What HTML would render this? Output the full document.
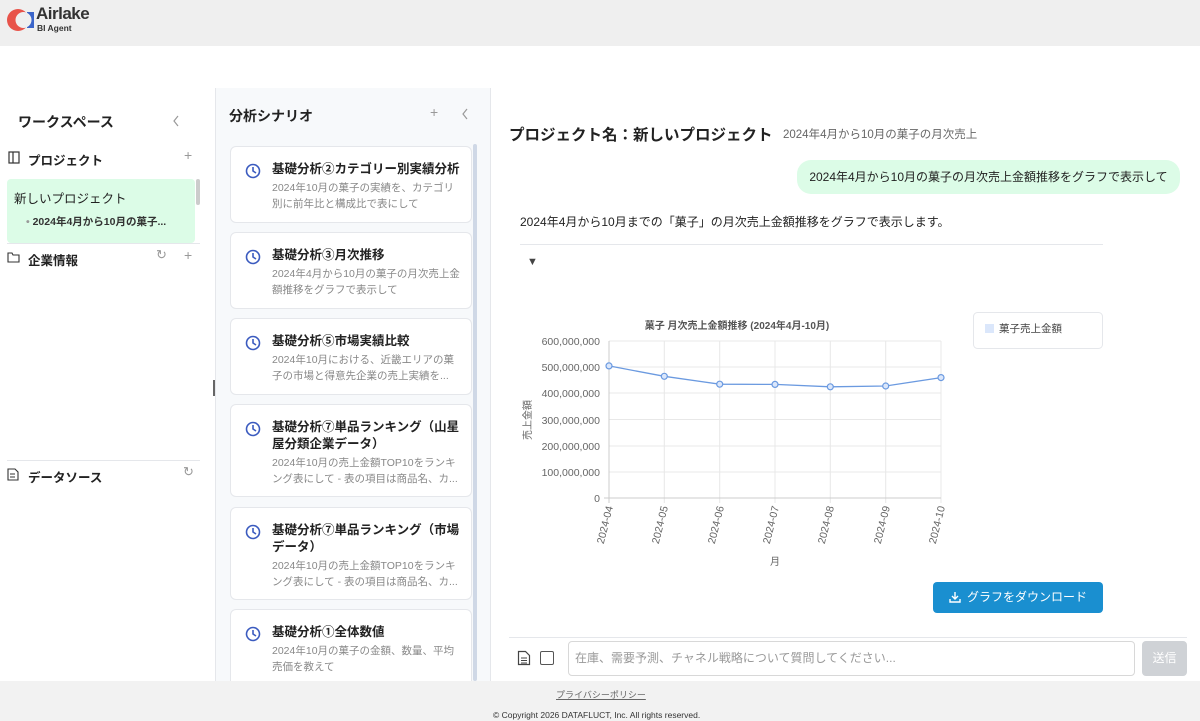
<!DOCTYPE html>
<html><head><meta charset="utf-8"><style>
*{box-sizing:border-box;margin:0;padding:0}
body{width:1200px;height:721px;overflow:hidden;background:#fff;font-family:"Liberation Sans","Noto Sans CJK JP",sans-serif;color:#222;position:relative}
.a{position:absolute}
.hdr{left:0;top:0;width:1200px;height:46px;background:#efefef}
.side{left:0;top:88px;width:213px;height:593px;background:#fff}
.mid{left:215px;top:88px;width:276px;height:593px;background:#f7f9fb;border-left:1px solid #e5e7eb;border-right:1px solid #e5e7eb}
.card{position:absolute;left:14px;width:242px;background:#fff;border:1px solid #e5e7eb;border-radius:6px}
.card .t{position:absolute;left:41px;top:14px;font-size:12.5px;font-weight:bold;color:#222;line-height:17px;width:195px}
.card .d{position:absolute;left:41px;font-size:10.5px;color:#888;line-height:16px;width:190px}
.clk{position:absolute;left:14px;top:16px;width:16px;height:16px}
.foot{left:0;top:681px;width:1200px;height:40px;background:#f2f2f2}
.gray{color:#999}
</style></head><body>
<div class="a hdr">
<svg class="a" style="left:6px;top:7px" width="30" height="26" viewBox="0 0 30 26"><circle cx="12" cy="13" r="11" fill="#e8534a"/><rect x="21" y="5" width="7" height="16" fill="#3a64c9"/><circle cx="17.5" cy="13" r="8" fill="#efefef"/></svg>
<div class="a" style="left:36px;top:4px;font-size:17px;font-weight:bold;color:#333;letter-spacing:-0.5px">Airlake</div>
<div class="a" style="left:37px;top:23px;font-size:8.5px;font-weight:bold;color:#333">BI Agent</div>
</div>

<div class="a side">
<div class="a" style="left:18px;top:24px;font-size:14px;font-weight:bold">ワークスペース</div>
<svg class="a" style="left:172px;top:27px" width="8" height="12"><path d="M6 1L2 6l4 5" fill="none" stroke="#999" stroke-width="1.2"/></svg>
<svg class="a" style="left:8px;top:63px" width="12" height="13"><rect x="1" y="1" width="10" height="11" fill="none" stroke="#333" stroke-width="1.2"/><line x1="5" y1="1" x2="5" y2="12" stroke="#333" stroke-width="1.2"/></svg>
<div class="a" style="left:28px;top:62px;font-size:12.5px;font-weight:bold">プロジェクト</div>
<div class="a gray" style="left:184px;top:59px;font-size:14px">+</div>
<div class="a" style="left:7px;top:91px;width:188px;height:64px;background:#dcfce7;border-radius:4px"></div>
<div class="a" style="left:196px;top:91px;width:4px;height:26px;background:#ccc;border-radius:2px"></div>
<div class="a" style="left:14px;top:100px;font-size:12.5px">新しいプロジェクト</div>
<div class="a" style="left:26px;top:126px;font-size:10.5px;font-weight:bold;color:#333"><span class="gray">• </span>2024年4月から10月の菓子...</div>
<div class="a" style="left:7px;top:155px;width:193px;height:1px;background:#e5e7eb"></div>
<svg class="a" style="left:7px;top:164px" width="13" height="11"><path d="M1 1h4l1 2h6v7H1z" fill="none" stroke="#333" stroke-width="1.1"/></svg>
<div class="a" style="left:28px;top:162px;font-size:12.5px;font-weight:bold">企業情報</div>
<div class="a gray" style="left:156px;top:159px;font-size:13px">↻</div>
<div class="a gray" style="left:184px;top:159px;font-size:14px">+</div>
<div class="a" style="left:7px;top:372px;width:193px;height:1px;background:#e5e7eb"></div>
<svg class="a" style="left:7px;top:380px" width="12" height="13"><path d="M1 1h7l3 3v8H1z" fill="none" stroke="#333" stroke-width="1.1"/><path d="M3 6h5M3 9h5" stroke="#333"/></svg>
<div class="a" style="left:28px;top:379px;font-size:12.5px;font-weight:bold">データソース</div>
<div class="a gray" style="left:183px;top:376px;font-size:13px">↻</div>
</div>
<div class="a" style="left:213px;top:380px;width:2px;height:16px;background:#666"></div>
<div class="a" style="left:489px;top:380px;width:2px;height:16px;background:#666"></div>

<div class="a mid">
<div class="a" style="left:13px;top:18px;font-size:14px;font-weight:bold">分析シナリオ</div>
<div class="a gray" style="left:214px;top:16px;font-size:14px">+</div>
<svg class="a" style="left:245px;top:20px" width="8" height="12"><path d="M6 1L2 6l4 5" fill="none" stroke="#999" stroke-width="1.2"/></svg>
<div class="a" style="left:257px;top:56px;width:4px;height:537px;background:#cfd8e6;border-radius:2px"></div>
<div class="card" style="top:58px;height:77px"><svg class="clk"><circle cx="8" cy="8" r="6.5" fill="none" stroke="#3b5bbf" stroke-width="1.6"/><path d="M8 4v4l3 2" fill="none" stroke="#3b5bbf" stroke-width="1.6"/></svg><div class="t">基礎分析②カテゴリー別実績分析</div><div class="d" style="top:33px">2024年10月の菓子の実績を、カテゴリ別に前年比と構成比で表にして</div></div>
<div class="card" style="top:144px;height:77px"><svg class="clk"><circle cx="8" cy="8" r="6.5" fill="none" stroke="#3b5bbf" stroke-width="1.6"/><path d="M8 4v4l3 2" fill="none" stroke="#3b5bbf" stroke-width="1.6"/></svg><div class="t">基礎分析③月次推移</div><div class="d" style="top:33px">2024年4月から10月の菓子の月次売上金額推移をグラフで表示して</div></div>
<div class="card" style="top:230px;height:77px"><svg class="clk"><circle cx="8" cy="8" r="6.5" fill="none" stroke="#3b5bbf" stroke-width="1.6"/><path d="M8 4v4l3 2" fill="none" stroke="#3b5bbf" stroke-width="1.6"/></svg><div class="t">基礎分析⑤市場実績比較</div><div class="d" style="top:33px">2024年10月における、近畿エリアの菓子の市場と得意先企業の売上実績を...</div></div>
<div class="card" style="top:316px;height:93px"><svg class="clk"><circle cx="8" cy="8" r="6.5" fill="none" stroke="#3b5bbf" stroke-width="1.6"/><path d="M8 4v4l3 2" fill="none" stroke="#3b5bbf" stroke-width="1.6"/></svg><div class="t">基礎分析⑦単品ランキング（山星屋分類企業データ）</div><div class="d" style="top:50px">2024年10月の売上金額TOP10をランキング表にして - 表の項目は商品名、カ...</div></div>
<div class="card" style="top:419px;height:93px"><svg class="clk"><circle cx="8" cy="8" r="6.5" fill="none" stroke="#3b5bbf" stroke-width="1.6"/><path d="M8 4v4l3 2" fill="none" stroke="#3b5bbf" stroke-width="1.6"/></svg><div class="t">基礎分析⑦単品ランキング（市場データ）</div><div class="d" style="top:50px">2024年10月の売上金額TOP10をランキング表にして - 表の項目は商品名、カ...</div></div>
<div class="card" style="top:521px;height:90px"><svg class="clk"><circle cx="8" cy="8" r="6.5" fill="none" stroke="#3b5bbf" stroke-width="1.6"/><path d="M8 4v4l3 2" fill="none" stroke="#3b5bbf" stroke-width="1.6"/></svg><div class="t">基礎分析①全体数値</div><div class="d" style="top:33px">2024年10月の菓子の金額、数量、平均売価を教えて</div></div>
</div>

<div class="a" style="left:509px;top:123px;font-size:15.5px;font-weight:bold">プロジェクト名：新しいプロジェクト</div>
<div class="a" style="left:783px;top:126px;font-size:11.5px;color:#666">2024年4月から10月の菓子の月次売上</div>
<div class="a" style="left:797px;top:160px;width:383px;height:34px;background:#dcfce7;border-radius:14px;font-size:12px;line-height:34px;text-align:center">2024年4月から10月の菓子の月次売上金額推移をグラフで表示して</div>
<div class="a" style="left:520px;top:213px;font-size:12px">2024年4月から10月までの「菓子」の月次売上金額推移をグラフで表示します。</div>
<div class="a" style="left:520px;top:244px;width:583px;height:1px;background:#e5e7eb"></div>
<div class="a" style="left:527px;top:256px;font-size:11px;color:#444">▼</div>

<svg class="a" style="left:500px;top:300px" width="620" height="280" font-family="Liberation Sans, Noto Sans CJK JP, sans-serif">
<text x="237" y="29" font-size="10" font-weight="bold" fill="#555" text-anchor="middle">菓子 月次売上金額推移 (2024年4月-10月)</text>
<g stroke="#e8e8e8" stroke-width="1">
<line x1="109" y1="41" x2="441" y2="41"/><line x1="109" y1="67" x2="441" y2="67"/><line x1="109" y1="93" x2="441" y2="93"/><line x1="109" y1="119.5" x2="441" y2="119.5"/><line x1="109" y1="146" x2="441" y2="146"/><line x1="109" y1="172" x2="441" y2="172"/>
<line x1="164.3" y1="41" x2="164.3" y2="203"/><line x1="219.7" y1="41" x2="219.7" y2="203"/><line x1="275" y1="41" x2="275" y2="203"/><line x1="330.3" y1="41" x2="330.3" y2="203"/><line x1="385.7" y1="41" x2="385.7" y2="203"/><line x1="441" y1="41" x2="441" y2="203"/>
</g>
<line x1="109" y1="41" x2="109" y2="203" stroke="#ccc"/><line x1="104" y1="198" x2="441" y2="198" stroke="#ccc"/>
<g font-size="10.5" fill="#666" text-anchor="end">
<text x="100" y="45">600,000,000</text><text x="100" y="71">500,000,000</text><text x="100" y="97">400,000,000</text><text x="100" y="124">300,000,000</text><text x="100" y="150">200,000,000</text><text x="100" y="176">100,000,000</text><text x="100" y="202">0</text>
</g>
<text transform="translate(31,120) rotate(-90)" font-size="10" fill="#666" text-anchor="middle">売上金額</text>
<polyline points="109,65.9 164.3,76.3 219.7,84.2 275,84.4 330.3,86.8 385.7,86 441,77.6" fill="none" stroke="#6b9ae0" stroke-width="1.3"/>
<g fill="#dbe7fb" stroke="#6b9ae0" stroke-width="1.2"><circle cx="109" cy="65.9" r="3"/><circle cx="164.3" cy="76.3" r="3"/><circle cx="219.7" cy="84.2" r="3"/><circle cx="275" cy="84.4" r="3"/><circle cx="330.3" cy="86.8" r="3"/><circle cx="385.7" cy="86" r="3"/><circle cx="441" cy="77.6" r="3"/></g>
<g font-size="10.5" fill="#666" text-anchor="end">
<text transform="translate(113,207) rotate(-76)">2024-04</text><text transform="translate(168,207) rotate(-76)">2024-05</text><text transform="translate(224,207) rotate(-76)">2024-06</text><text transform="translate(279,207) rotate(-76)">2024-07</text><text transform="translate(334,207) rotate(-76)">2024-08</text><text transform="translate(390,207) rotate(-76)">2024-09</text><text transform="translate(445,207) rotate(-76)">2024-10</text>
</g>
<text x="275" y="265" font-size="10" fill="#666" text-anchor="middle">月</text>
<rect x="473.5" y="12.5" width="129" height="36" rx="4" fill="#fff" stroke="#e5e7eb"/>
<rect x="485" y="24" width="9" height="9" fill="#dbe7fb"/>
<text x="499" y="32" font-size="10.5" fill="#444">菓子売上金額</text>
</svg>

<div class="a" style="left:933px;top:582px;width:170px;height:31px;background:#1a8fd0;border-radius:4px;color:#fff;font-size:12px;line-height:31px;text-align:center">
<svg width="12" height="12" style="vertical-align:-2px;margin-right:6px"><path d="M6 1v7M3 5l3 3 3-3M1 8v3h10V8" fill="none" stroke="#fff" stroke-width="1.4"/></svg>グラフをダウンロード</div>
<div class="a" style="left:509px;top:637px;width:678px;height:1px;background:#e5e7eb"></div>
<svg class="a" style="left:517px;top:650px" width="14" height="16"><path d="M1.5 1.5h7l4 4v9h-11z" fill="none" stroke="#444" stroke-width="1.2"/><path d="M4 8h6M4 10.5h6M4 13h6" stroke="#444"/></svg>
<div class="a" style="left:540px;top:651px;width:14px;height:14px;border:1.2px solid #555;border-radius:2px"></div>
<div class="a" style="left:568px;top:641px;width:567px;height:35px;border:1px solid #d8d8d8;border-radius:4px;font-size:12px;color:#999;line-height:33px;padding-left:6px">在庫、需要予測、チャネル戦略について質問してください...</div>
<div class="a" style="left:1142px;top:641px;width:45px;height:35px;background:#cfd2d6;border-radius:4px;color:#fff;font-size:12px;line-height:35px;text-align:center">送信</div>

<div class="a foot">
<div class="a" style="left:556px;top:7px;font-size:9px;color:#666;text-decoration:underline">プライバシーポリシー</div>
<div class="a" style="left:493px;top:29px;font-size:8.5px;color:#333">© Copyright 2026 DATAFLUCT, Inc. All rights reserved.</div>
</div>
</body></html>
